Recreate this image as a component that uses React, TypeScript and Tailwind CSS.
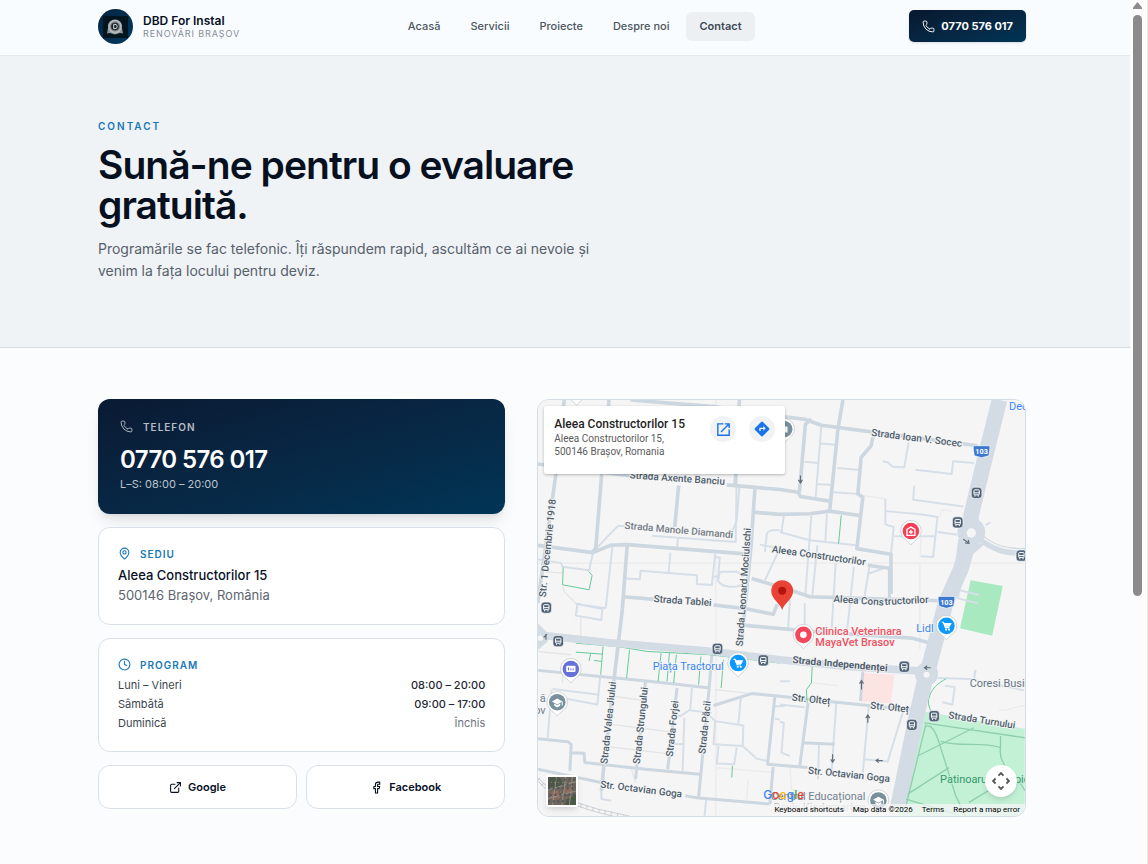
import { Clock, ExternalLink, Facebook, MapPin, Phone } from "lucide-react";
import type { ReactNode } from "react";

const navItems = ["Acasă", "Servicii", "Proiecte", "Despre noi", "Contact"];

const hours = [
  { day: "Luni – Vineri", time: "08:00 – 20:00", closed: false },
  { day: "Sâmbătă", time: "09:00 – 17:00", closed: false },
  { day: "Duminică", time: "Închis", closed: true },
];

function Logo() {
  return (
    <svg viewBox="0 0 35 35" className="size-[35px] shrink-0" aria-hidden="true">
      <defs>
        <linearGradient id="logo-bg" x1="0" y1="0" x2="1" y2="1">
          <stop offset="0" stopColor="#06233f" />
          <stop offset="1" stopColor="#003a60" />
        </linearGradient>
      </defs>
      <circle cx="17.500" cy="17.500" r="17.500" fill="url(#logo-bg)" />
      <rect x="5" y="7" width="25" height="22" fill="#03161f" />
      <path d="M10 19l-1 5.500 3-.5 5 1.500 5-1.500 3 .5-1-5.500z" fill="#8f9496" />
      <circle cx="17" cy="17.500" r="7" fill="#b5b8ba" />
      <circle cx="17" cy="17.500" r="5" fill="#7d8386" />
      <circle cx="17" cy="17.500" r="3.800" fill="#16242c" />
      <path d="M15.700 15.300h1.300a2.200 2.200 0 0 1 0 4.400h-1.300z" fill="none" stroke="#d5d8d9" strokeWidth="1" />
    </svg>
  );
}

function Header() {
  return (
    <header className="border-b border-[#e4e9ed] bg-[#f9fcff]">
      <div className="mr-[104px] ml-[98px] flex h-[55px] items-center justify-between pb-[3px]">
        <a href="#" className="flex items-center gap-2.5">
          <Logo />
          <span className="flex flex-col">
            <span className="text-[12px] leading-4 font-semibold text-[#06101f]">DBD For Instal</span>
            <span className="text-[9px] leading-[10px] tracking-[0.1em] text-[#858d95] uppercase">Renovări Brașov</span>
          </span>
        </a>
        <nav className="flex gap-1">
          {navItems.map((item) => (
            <a
              key={item}
              href="#"
              className={
                item === "Contact"
                  ? "rounded-md bg-[#edf0f3] px-[13px] py-[6px] text-[11px] leading-[17px] font-semibold text-[#3f4a56]"
                  : "rounded-md px-[13px] py-[6px] text-[11px] leading-[17px] font-medium text-[#4b5660]"
              }
            >
              {item}
            </a>
          ))}
        </nav>
        <a
          href="tel:0770576017"
          className="flex h-8 items-center gap-1.5 rounded-[5px] bg-linear-to-br from-[#08182f] to-[#003556] px-[13px] text-[11px] font-bold text-white shadow-sm"
        >
          <Phone className="size-[13px]" strokeWidth={1.75} />
          0770 576 017
        </a>
      </div>
    </header>
  );
}

function CardTitle({ icon, children }: { icon: ReactNode; children: ReactNode }) {
  return (
    <h2 className="flex items-center gap-[9px] text-[10px] leading-3 font-semibold tracking-[0.1em] text-[#1878b8] uppercase">
      {icon}
      {children}
    </h2>
  );
}

const labels: { x: number; y: number; r: number; t: string; c?: string; w?: number }[] = [
  { x: 297, y: 263, r: 4, t: "Strada Axente Banciu" },
  { x: 281, y: 415, r: 5, t: "Strada Manole Diamandi", c: "#747c85" },
  { x: 44, y: 622, r: -84, t: "Str. 1 Decembrie 1918" },
  { x: 369, y: 636, r: 4, t: "Strada Tablei" },
  { x: 638, y: 770, r: -86, t: "Strada Leonard Mociulschi" },
  { x: 725, y: 486, r: 8, t: "Aleea Constructorilor" },
  { x: 1025, y: 135, r: 7, t: "Strada Ioan V. Socec" },
  { x: 911, y: 636, r: 4, t: "Aleea Cons" },
  { x: 1066, y: 645, r: -3, t: "tructorilor" },
  { x: 787, y: 820, r: 5, t: "Strada Independenței", w: 700 },
  { x: 785, y: 933, r: 6, t: "Str. Olteț" },
  { x: 1022, y: 957, r: 6, t: "Str. Olteț" },
  { x: 1257, y: 986, r: 9, t: "Strada Turnului" },
  { x: 834, y: 1153, r: 6, t: "Str. Octavian Goga" },
  { x: 208, y: 1195, r: 7, t: "Str. Octavian Goga" },
  { x: 230, y: 1125, r: -84, t: "Strada Valea Jiului" },
  { x: 328, y: 1125, r: -84, t: "Strada Strungului" },
  { x: 427, y: 1103, r: -84, t: "Strada Forjei" },
  { x: 525, y: 1095, r: -84, t: "Strada Păcii" },
];

const busStops: [number, number][] = [
  [1343, 307], [1286, 396], [1478, 496], [46, 653], [82, 754], [562, 777],
  [700, 812], [1125, 831], [1215, 980], [1148, 1006],
];

function Pin({ x, y, fill, children }: { x: number; y: number; fill: string; children: ReactNode }) {
  return (
    <g transform={`translate(${x} ${y})`}>
      <path d="M0 40C-7 28-31 20-31-3a31 31 0 0 1 62 0C31 20 7 28 0 40z" fill="#fff" stroke="#bcc3c9" strokeWidth="2" />
      <circle cy="-2" r="25" fill={fill} />
      {children}
    </g>
  );
}

function Cart() {
  return (
    <g fill="none" stroke="#fff" strokeWidth="3.500">
      <path d="M-14-13h5l6 16h12" />
      <path d="M-7-9h20l-4 8H-4z" fill="#fff" />
      <circle cx="-1" cy="9" r="1.500" />
      <circle cx="8" cy="9" r="1.500" />
    </g>
  );
}

function School({ x, y }: { x: number; y: number }) {
  return (
    <Pin x={x} y={y} fill="#78909c">
      <path d="M-16-4L0-13 16-4 0 5zM-9 2v7l9 5 9-5V2L0 7z" fill="#fff" />
      <path d="M15-4v12" stroke="#fff" strokeWidth="3" />
    </Pin>
  );
}

function StreetMap() {
  return (
    <svg
      viewBox="21 27 1467 1254"
      preserveAspectRatio="xMidYMid slice"
      className="absolute inset-0 size-full"
      role="img"
      aria-label="Hartă Aleea Constructorilor 15, Brașov"
    >
      <rect x="-500" y="-500" width="2600" height="2400" fill="#f5f5f5" />
      <path d="M1325 570l97 18-32 150-97-23z" fill="#a9e9c0" />
      <path d="M1180 965l308 53v263h-380z" fill="#c3f1d6" />
      <path d="M1002 850l93 5-10 87-90-7z" fill="#fce4e2" />

      <g fill="none" stroke="#e4e5e7" strokeWidth="4">
        <path d="M250 920l90 13M245 1005l195 25M240 1073l170 20M300 1130l15 50M555 900l180 20M150 680v55l-10 15M21 785l100 10M95 880v-45M45 545l50 3M95 590l5 15 40 40" />
        <path d="M1000 315l68 10M1230 378l10-20 30 4M1175 440l-2 62M1172 520v260M850 880l75 8M555 1135l180 15M655 1170l-5 60M780 1130l5 70 75 20M1500 950c-30-10-60 20-90 10M557 27v80M557 480v800M21 519h1467" strokeOpacity=".6" />
      </g>
      <g fill="none" stroke="#d6dfe8" strokeWidth="6" strokeLinejoin="round">
        <path d="M187 485l50-53 25-25h22M620 250l-3 205-252-19M628 290l-8 100-20 50M443 445l-3 28M245 470l-20 185M187 487l-12 53-80-10-5-12-69-10M420 487l-5 58M285 565l43 2 2-25 170 13v27l45 3 10-95M555 500l14 2-5 58-15-2M562 575c10-30 0-30 20-30h40l18 15M562 565c5 30 60 30 78 15" />
        <path d="M875 105l-17 215M825 213l40 4M872 158l48 4M922 232l68 6M862 280l43 3M910 305l75 5M1060 212l15 3 15 13 35 2 13-75M1158 237l110 13 4-38 63 5M1155 285l-3 43 151 20M1068 325v77l25 8-8 82M1068 362l112 10 45 8-13 120-37-2M1095 438h125M1225 425l60 8M762 375l-7 50M845 375l-18 235M892 370l-5 85M690 463l60 12-45 95M705 485l5-50c0-15 20-18 40-15M750 425l90 25 140 15M863 465l-15 150M918 520l-12 200M973 530l-20 190M1018 550l42-15M1020 530l-15 90M1290 600l60 15M1290 600l-3 25 60 15" />
        <path d="M140 642l-5 35 77 13 3-33-75-15M135 642l90 13M65 898l135 17M62 900l-12 145M65 920l135 25 8-80M485 895l-5 65-30 20-20-5M480 963l65 7M555 995l85 13-2 62-88-5 5-70-15-15M638 1070l42 38 33 7M620 1075l-8 50-52-2 5-53M632 925l-7 80M462 985l-5 160M735 950h30M750 990l-15-2M415 1063l47 2" />
        <path d="M780 630l-5 85M825 640v80M750 945l75 8M750 997l12 3-7 90 25 10M920 940l-15 220M1018 950l-18 200M1120 970l-45 147-70-7M868 1060l-3 110M1225 865l95 3 165 34M1340 840l-5 25M1247 888l30 4-7 53-30-7M1370 404l15-8M528 1230l-5 51M212 1200v30l30 5M750 875h30" />
      </g>
      <g fill="none" stroke="#cdd7e0" strokeWidth="11" strokeLinejoin="round">
        <path d="M21 220l280 36M590 283l160 14 55 8 7 13 88 14M100 27L75 250 20 640M235 27l-22 223-18 225-12 12M300 27l260 21 205 30 60 7 50 18 150 20 320 42M628 27l-13 260M21 465l165 22 54-22 50-2 355 28M675 290l-12 180-30 300M668 365l82 7 90-2 60-8 90 13M445 285l-12 125" />
        <path d="M290 463l-15 197-25 210-30 255-8 80M275 620l100 8M550 645l90 10 90 18 12-30M665 565l125 38 50 17 400 12M845 85l-18 15-18 205M940 27l-15 88-25 247M1030 140l-5 25-30 35-10 110 15 10-18 155 103 17v120M1015 525l70 10M630 705l220 20 300 20 55 15" />
        <path d="M21 842l180 18 140 13 200 22M545 795l-8 100-32 330M345 875l-30 295M440 895l-28 245M550 948l115-36 85 8 170 18 240 24M21 1048l90 9 10 8-4 80M120 1090l40 2 2 28 183 20 163 15M21 1140l190 40M465 1220l40 7 215 18 10-115M735 920l-22 205 120 10M1000 845l-7 90M835 940l-25 190M820 1060l95 5M1080 530v95" strokeWidth="9" />
      </g>
      <g fill="none" stroke="#67c99a" strokeWidth="3">
        <path d="M97 532l-2 52 80 15 9-43-10-12M935 375l-8 85M135 760l125 10 90 15 190 10 210 25M135 787l80 6M217 770l-7 85M297 780l-9 85M392 790l-9 85M417 790l-7 85M438 795l-8 85M512 800l-7 85M580 810l-7 85M180 790l-5 24M190 812l22 3M607 1130l-2 35M848 820l-3 60-15 20 2 40M1250 868c-40 20-65 60-45 95" />
      </g>

      <g fill="none" stroke="#d3dce4">
        <path d="M21 735l230 25 300 25 200 25 200 20 240 15" strokeWidth="23" />
        <path d="M1412 27l-50 200-36 150 1 50M1327 428l-32 110-45 100-50 190-10 30-30 130-55 270" strokeWidth="47" strokeLinejoin="round" />
        <path d="M1350 440c50 40 80 45 140 45" strokeWidth="24" />
        <path d="M1365 444c40 30 80 35 125 37" stroke="#f5f5f5" strokeWidth="4" />
      </g>
      <path d="M21 700l25 25 5 30-30 25z" fill="#d3dce4" />
      <circle cx="1327" cy="425" r="42" fill="#d3dce4" />
      <path d="M1288 445l-14 110 22-30 70-63z" fill="#d3dce4" />
      <circle cx="1327" cy="428" r="14" fill="#f5f5f5" />
      <circle cx="1192" cy="853" r="35" fill="#d3dce4" />
      <circle cx="1192" cy="855" r="9" fill="#f5f5f5" />
      <circle cx="28" cy="745" r="8" fill="#f5f5f5" />
      <g fill="none" stroke="#8fceac" strokeWidth="4">
        <path d="M1185 1000l303 45M1190 1005l-60 245M1165 1100l170-85M1190 1010c20-5 30 20 40 50l50 160 30 61M1235 1055c50 20 130 0 180 20v-35M1415 1075c-10 60 60 90 73 130M1135 1215l125-80M1130 1230l150 45M1320 1240l100-60" />
      </g>
      <g fill="none" stroke="#cccfd3" strokeWidth="3">
        <path d="M21 1165c40 50 110 75 180 95l95 21M21 1175c40 50 110 75 180 95l60 15" />
        <path d="M21 1170c40 50 110 75 180 95l80 17" strokeWidth="12" strokeDasharray="3 16" />
      </g>
      <g fill="none" stroke="#606c76" strokeWidth="3.500">
        <path d="M812 255v22M806 268l6 9 6-9M996 900v-26M990 882l6-9 6 9M1015 1000v-24M1009 986l6-9 6 9M909 1095v24M903 1110l6 9 6-9M1060 1114h-20M1048 1108l-8 6 8 6M1205 834h-18M1194 828l-8 6 8 6M1303 447l16 11M1308 458l12 1-2-10M48 733l-10 10M45 750v-18" />
      </g>

      <g
        fontFamily="Roboto, sans-serif"
        fontSize="30"
        stroke="#f5f5f5"
        strokeWidth="5"
        strokeLinejoin="round"
        style={{ paintOrder: "stroke" }}
      >
        {labels.map((l, i) => (
          <text
            key={i}
            transform={`translate(${l.x} ${l.y}) rotate(${l.r})`}
            fill={l.c ?? "#4e5d6c"}
            fontWeight={l.w ?? 500}
          >
            {l.t}
          </text>
        ))}
        <g fontSize="33">
          <text x="1441" y="56" fill="#4285f4">Dedeman</text>
          <text x="367" y="840" fill="#3a86f0">Piața Tractorul</text>
          <text x="1161" y="726" fill="#3a86f0">Lidl</text>
          <text x="857" y="735" fill="#ee5261" fontWeight="500">Clinica Veterinara</text>
          <text x="857" y="769" fill="#ee5261" fontWeight="500">MayaVet Brasov</text>
          <text x="1322" y="891" fill="#667684">Coresi Business</text>
          <text x="1233" y="1181" fill="#33976b" stroke="#c3f1d6">Patinoarul Olimpic</text>
          <text x="1008" y="1232" textAnchor="end" fill="#718290">Centrul Educațional</text>
          <text x="1008" y="1266" textAnchor="end" fill="#b2bbc2">Davis Kindergarten</text>
          <text x="44" y="938" textAnchor="end" fill="#718290">ă</text>
          <text x="44" y="972" textAnchor="end" fill="#718290">ov</text>
        </g>
      </g>

      {busStops.map(([x, y]) => (
        <g key={`${x}-${y}`} transform={`translate(${x} ${y})`}>
          <rect x="-16" y="-17" width="32" height="34" rx="10" fill="#506275" stroke="#fff" strokeWidth="2" />
          <rect x="-8" y="-9" width="16" height="15" rx="2" fill="none" stroke="#fff" strokeWidth="3" />
          <path d="M-8 0H8M-5 7v4M5 7v4" stroke="#fff" strokeWidth="3" />
        </g>
      ))}
      {[[1358, 182], [1252, 636]].map(([x, y]) => (
        <g key={x} transform={`translate(${x} ${y})`}>
          <path d="M-25-17h50v10l-3 20L0 19l-22-6-3-20z" fill="#3d78cf" stroke="#fff" strokeWidth="2" />
          <text y="8" textAnchor="middle" fontFamily="Roboto, sans-serif" fontSize="22" fontWeight="700" fill="#fff">103</text>
        </g>
      ))}

      <Pin x={1145} y={424} fill="#f43f55">
        <path d="M-12 11v-18L0-14l12 7v18z" fill="none" stroke="#fff" strokeWidth="4" />
        <path d="M0-6V7M-6 1H6" stroke="#fff" strokeWidth="4" />
      </Pin>
      <Pin x={821} y={737} fill="#f4475b"><circle cy="-2" r="10" fill="#fff" /></Pin>
      <Pin x={624} y={822} fill="#0d99ff"><Cart /></Pin>
      <Pin x={1252} y={710} fill="#0d99ff"><Cart /></Pin>
      <Pin x={120} y={840} fill="#6672dc">
        <rect x="-14" y="-12" width="28" height="19" rx="3" fill="#fff" />
        <path d="M-7-7v9M0-4v6M7-4v6" stroke="#6672dc" strokeWidth="3" />
      </Pin>
      <Pin x={137} y={3} fill="#fff"><circle r="5" fill="#fff" /></Pin>
      <Pin x={763} y={117} fill="#78909c"><rect x="-10" y="-10" width="20" height="18" fill="#fff" /></Pin>
      <School x={79} y={940} />
      <School x={1047} y={1236} />

      <path d="M757 660c-4-18-33-32-33-57a33 33 0 0 1 66 0c0 25-29 39-33 57z" fill="#ea4335" />
      <circle cx="757" cy="602" r="12" fill="#b31412" />
    </svg>
  );
}

function MapPanel() {
  return (
    <section className="relative h-[418px] overflow-hidden rounded-xl border border-[#d5dde6] bg-[#f5f5f5]">
      <StreetMap />
      <div className="absolute top-1.5 left-1.5 flex h-[68px] w-[241px] justify-between rounded-[2px] bg-white px-2.5 pt-2.5 shadow-[0_1px_3px_#0004]">
        <div>
          <h3 className="font-['Roboto',sans-serif] text-[12px] leading-4 font-medium whitespace-nowrap text-[#1f1f1f]">Aleea Constructorilor 15</h3>
          <p className="font-['Roboto',sans-serif] text-[10px] leading-[13px] text-[#5b5b5b]">
            Aleea Constructorilor 15,
            <br />
            500146 Brașov, Romania
          </p>
        </div>
        <div className="flex gap-[13px]">
          <a href="#" aria-label="Deschide în Maps" className="flex size-[26px] items-center justify-center rounded-full bg-[#f1f2f3]">
            <svg viewBox="0 0 24 24" className="size-[17px]" fill="#1a73e8">
              <path d="M19 19H5V5h7V3H3v18h18v-9h-2zM14 3v2h3.600l-9.800 9.800 1.400 1.400L19 6.400V10h2V3z" />
            </svg>
          </a>
          <a href="#" aria-label="Indicații" className="flex size-[26px] items-center justify-center rounded-full bg-[#f1f2f3]">
            <svg viewBox="0 0 24 24" className="size-4" fill="#1a73e8">
              <path d="M22.400 10.600l-9-9a2 2 0 0 0-2.800 0l-9 9a2 2 0 0 0 0 2.800l9 9a2 2 0 0 0 2.800 0l9-9a2 2 0 0 0 0-2.800zM14 14.500V12h-4v3H8v-4a1 1 0 0 1 1-1h5V7.500l3.500 3.500z" />
            </svg>
          </a>
        </div>
      </div>
      <button type="button" aria-label="Satelit" className="absolute bottom-[9px] left-2 size-8 overflow-hidden rounded-[2px] border-2 border-white shadow-md">
        <svg viewBox="0 0 30 30" className="size-full">
          <rect width="30" height="30" fill="#6b655c" />
          <path d="M0 0h12l4 6-5 5H0zM20 24l10-5v11H18z" fill="#4b5945" />
          <path d="M2 17l9-3 3 8-9 4zM16 12l7-2 2 5-7 4z" fill="#8d695c" />
          <path d="M0 14L30 5M9 0L5 30M19 0l-4 30M0 23l30-8M26 0l-3 30" stroke="#969187" fill="none" />
          <path d="M2 3h28M0 8h30M0 12h28M2 19h28M0 26h29" stroke="#50545a" strokeWidth="2" strokeDasharray="2 3" />
          <path d="M3 6h26M1 16h28M3 22h22" stroke="#9b9285" strokeDasharray="1 3" />
        </svg>
      </button>
      <button type="button" aria-label="Comenzi cameră" className="absolute right-2 bottom-[19px] flex size-8 items-center justify-center rounded-full bg-white shadow-md">
        <svg viewBox="0 0 24 24" className="size-5" fill="none" stroke="#555" strokeWidth="2.200">
          <path d="M9 5.500l3-3 3 3M9 18.500l3 3 3-3M5.500 9l-3 3 3 3M18.500 9l3 3-3 3" />
        </svg>
      </button>
      <div className="absolute right-0 bottom-0 flex gap-[9px] bg-[#f5f5f5]/75 px-[5px] font-['Roboto',sans-serif] text-[8px] leading-3 whitespace-nowrap text-black">
        <button type="button">Keyboard shortcuts</button>
        <span>Map data ©2026</span>
        <a href="#">Terms</a>
        <a href="#">Report a map error</a>
      </div>
      <div className="absolute bottom-[13px] left-[225px] text-[12px] leading-4 font-medium text-[#4285f4]">
        G<span className="text-[#ea4335]">o</span><span className="text-[#fbbc05]">o</span>g<span className="text-[#34a853]">l</span><span className="text-[#ea4335]">e</span>
      </div>
    </section>
  );
}

export default function App() {
  return (
    <div className="flex min-h-screen bg-[#fbfcfe] font-['Inter',sans-serif]">
      <div className="flex-1">
        <Header />
        <section className="border-b border-[#d5dde4] bg-[#f0f3f6] pt-16 pr-[104px] pb-[65px] pl-[98px]">
          <p className="text-[10px] leading-3 font-semibold tracking-[0.2em] text-[#1878b8] uppercase">Contact</p>
          <h1 className="mt-[13px] max-w-[520px] text-[39px] leading-10 font-semibold tracking-tight text-[#06101f]">
            Sună-ne pentru o evaluare gratuită.
          </h1>
          <p className="mt-[13px] max-w-[520px] text-[14px] leading-[22px] text-[#56616b]">
            Programările se fac telefonic. Îți răspundem rapid, ascultăm ce ai nevoie și venim la fața locului pentru deviz.
          </p>
        </section>

        <main className="grid grid-cols-[5fr_6fr] items-start gap-8 pt-[51px] pr-[104px] pb-12 pl-[98px]">
          <div className="flex flex-col gap-[13px]">
            <a
              href="tel:0770576017"
              className="block h-[115px] rounded-xl bg-linear-to-br from-[#0a1a33] to-[#003556] px-[22px] pt-[21px] text-white shadow-lg"
            >
              <span className="flex items-center gap-2.5 text-[10px] leading-3 font-semibold tracking-[0.1em] text-[#b4bcc5] uppercase">
                <Phone className="size-[13px]" strokeWidth={1.75} />
                Telefon
              </span>
              <span className="mt-3 block text-[24px] leading-[30px] font-semibold tracking-tight">0770 576 017</span>
              <span className="mt-px block text-[11px] leading-4 text-[#bcc5cd]">L–S: 08:00 – 20:00</span>
            </a>
            <section className="h-[98px] rounded-xl border border-[#d9e0e8] bg-white px-[19px] pt-[19px]">
              <CardTitle icon={<MapPin className="size-[13px]" />}>Sediu</CardTitle>
              <p className="mt-[5px] text-[13px] leading-5 font-medium text-[#06101f]">Aleea Constructorilor 15</p>
              <p className="text-[13px] leading-5 text-[#5d6670]">500146 Brașov, România</p>
            </section>
            <section className="h-[114px] rounded-xl border border-[#d9e0e8] bg-white px-[19px] pt-[19px]">
              <CardTitle icon={<Clock className="size-[13px]" />}>Program</CardTitle>
              <dl className="mt-[5px] text-[11px] leading-[19px] text-[#3a4551]">
                {hours.map((h) => (
                  <div key={h.day} className="flex justify-between">
                    <dt>{h.day}</dt>
                    <dd className={h.closed ? "text-[#6c757e]" : "font-medium text-[#1e2936]"}>{h.time}</dd>
                  </div>
                ))}
              </dl>
            </section>
            <div className="grid grid-cols-2 gap-[9px]">
              <a href="#" className="flex h-11 items-center justify-center gap-1.5 rounded-xl border border-[#d9e0e8] bg-white text-[11px] font-semibold text-[#06101f]">
                <ExternalLink className="size-[13px]" />
                Google
              </a>
              <a href="#" className="flex h-11 items-center justify-center gap-1.5 rounded-xl border border-[#d9e0e8] bg-white text-[11px] font-semibold text-[#06101f]">
                <Facebook className="size-[13px]" />
                Facebook
              </a>
            </div>
          </div>
          <MapPanel />
        </main>
      </div>
      <div className="flex w-[18px] shrink-0 flex-col items-center border-r border-[#eceade] bg-[#fcfcfc] pr-[2px]" aria-hidden="true">
        <svg viewBox="0 0 9 7" className="mt-0.5 h-[7px] w-[9px]" fill="#8b8b8b">
          <path d="M4.500 0L9 5.500V7H0V5.500z" />
        </svg>
        <div className="mt-1.5 h-[581px] w-[9px] rounded-full bg-[#8b8b8b]" />
      </div>
    </div>
  );
}
